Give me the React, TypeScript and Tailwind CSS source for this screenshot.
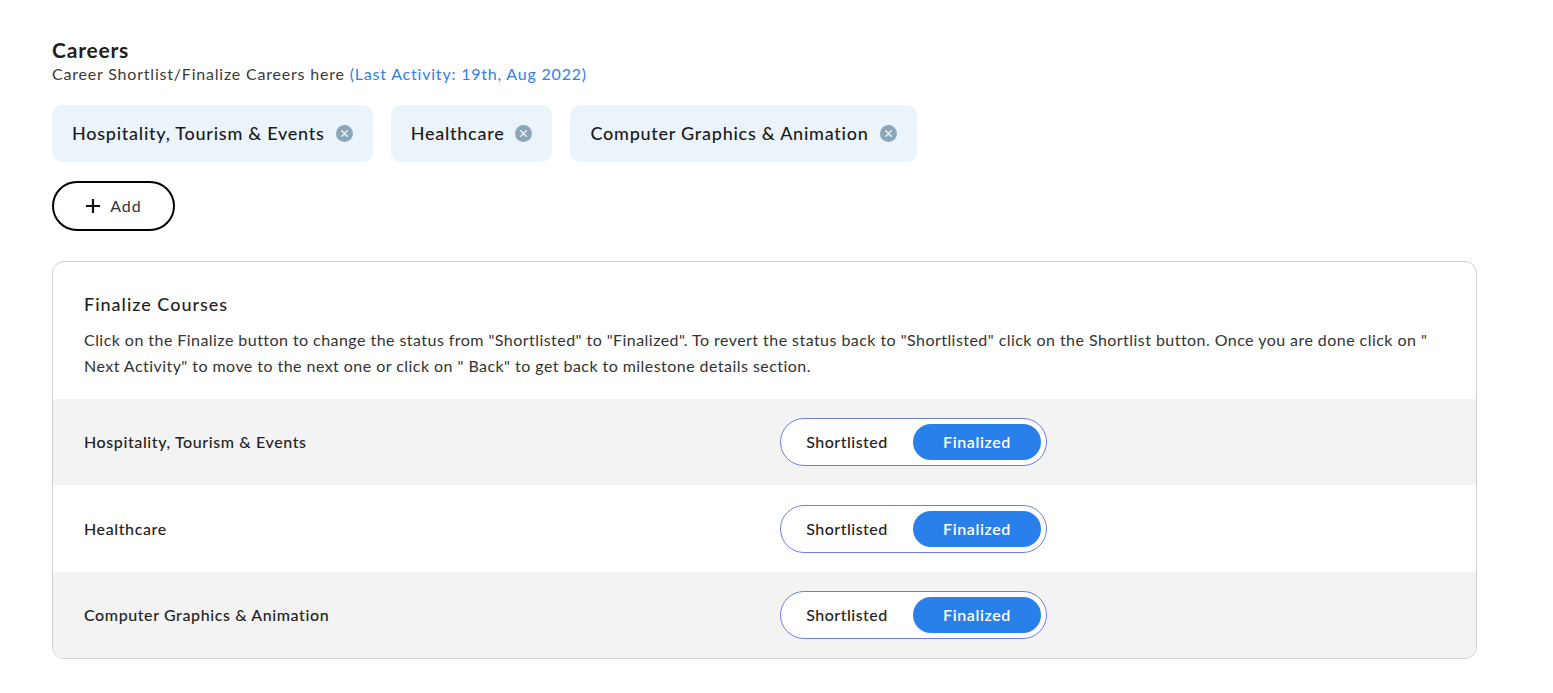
import React from "react";

const careers = [
  "Hospitality, Tourism & Events",
  "Healthcare",
  "Computer Graphics & Animation",
];

function XCircle() {
  return (
    <svg width="17" height="17" viewBox="0 0 17 17" className="shrink-0">
      <circle cx="8.5" cy="8.5" r="8.5" fill="#8aa7bc" />
      <path d="M5.6 5.6 L11.4 11.4 M11.4 5.6 L5.6 11.4" stroke="#ffffff" strokeWidth="1.3" strokeLinecap="round" />
    </svg>
  );
}

function Toggle() {
  return (
    <div className="flex items-center w-[267px] h-[48px] rounded-full border border-[#6d7fe3] bg-white pr-[5px]">
      <div className="flex-1 text-center text-[16px] tracking-[0.5px] font-medium text-[#222]">Shortlisted</div>
      <div className="w-[128px] h-[36px] rounded-full bg-[#2a80ea] flex items-center justify-center text-[16px] tracking-[0.6px] font-semibold text-white">
        Finalized
      </div>
    </div>
  );
}

export default function App() {
  return (
    <div
      className="min-h-[693px] bg-white pt-[38px] px-[52px] text-[#222]"
      style={{ fontFamily: "Lato, 'Noto Sans', sans-serif" }}
    >
      <div className="text-[21px] leading-[24px] tracking-[0.8px] font-bold text-[#1e1e1e]">Careers</div>
      <div className="mt-[2px] text-[16px] leading-[20px] tracking-[0.8px] text-[#3a3a3a]">
        Career Shortlist/Finalize Careers here{" "}
        <span className="text-[#2f80ed]">(Last Activity: 19th, Aug 2022)</span>
      </div>

      <div className="mt-[21px] flex gap-[18px]">
        {careers.map((c) => (
          <div
            key={c}
            className="h-[57px] px-[20px] rounded-[10px] bg-[#ecf4fb] flex items-center gap-[11px]"
          >
            <span className="text-[18px] tracking-[0.75px] font-medium text-[#1a1a1a]">{c}</span>
            <XCircle />
          </div>
        ))}
      </div>

      <button className="mt-[19px] w-[123px] h-[50px] rounded-full border-2 border-black flex items-center justify-center gap-[9px] bg-white">
        <svg width="16" height="16" viewBox="0 0 16 16">
          <path d="M8 1 V15 M1 8 H15" stroke="#111" strokeWidth="2.2" />
        </svg>
        <span className="text-[16px] tracking-[1px] text-[#333]">Add</span>
      </button>

      <div className="mt-[30px] w-[1425px] rounded-[12px] border border-[#cfcfcf] overflow-hidden">
        <div className="px-[31px] pt-[30px] pb-[20px]">
          <div className="text-[18px] leading-[24px] tracking-[1px] font-medium text-[#1f1f1f]">Finalize Courses</div>
          <p className="mt-[11px] text-[16px] leading-[26px] tracking-[0.45px] text-[#333]">
            Click on the Finalize button to change the status from "Shortlisted" to "Finalized". To revert the status back to "Shortlisted" click on the Shortlist button. Once you are done click on " Next Activity" to move to the next one or click on " Back" to get back to milestone details section.
          </p>
        </div>
        {careers.map((c, i) => (
          <div
            key={c}
            className={
              "flex items-center px-[31px] " +
              (i === 1 ? "h-[87px] bg-white" : "h-[86px] bg-[#f3f3f3]")
            }
          >
            <div className="w-[696px] text-[16px] tracking-[0.6px] font-medium text-[#222]">{c}</div>
            <Toggle />
          </div>
        ))}
      </div>
    </div>
  );
}
